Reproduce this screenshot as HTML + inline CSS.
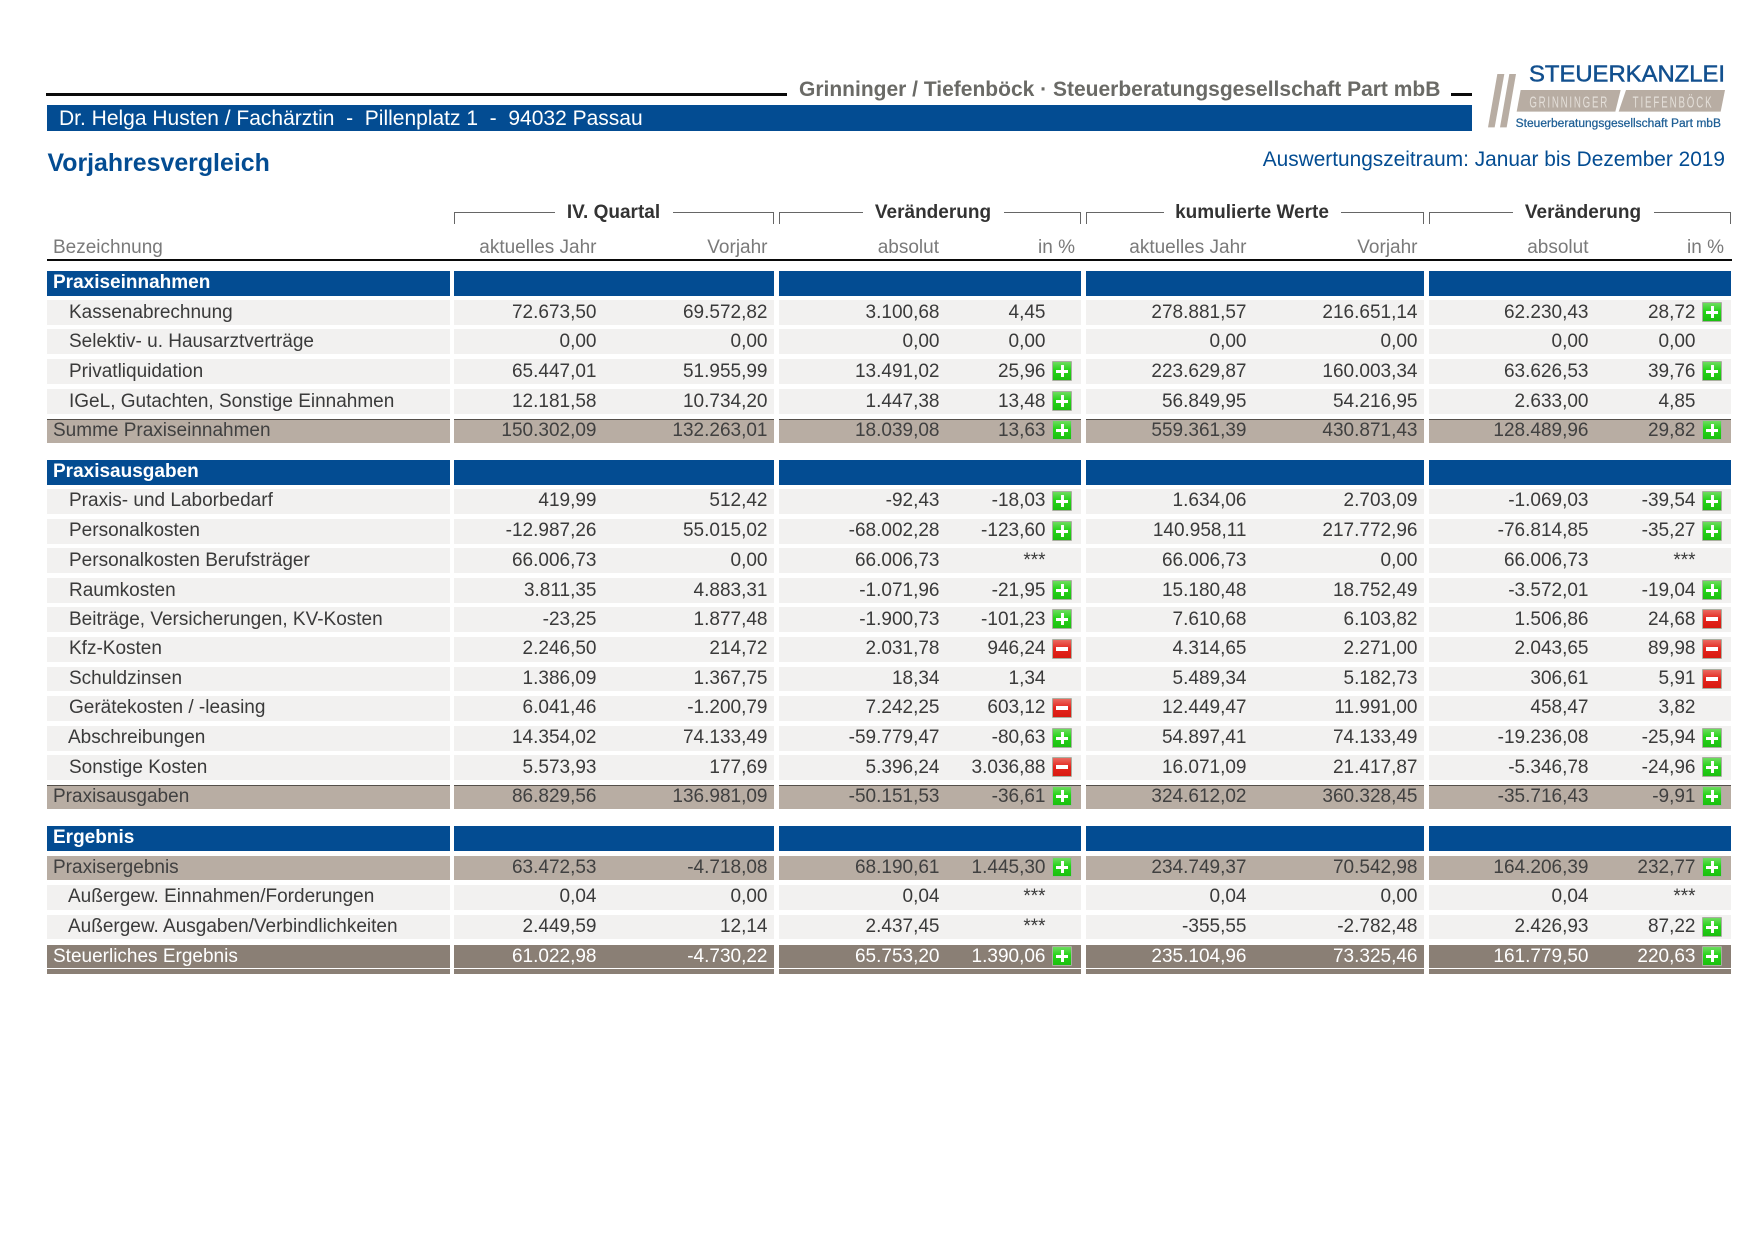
<!DOCTYPE html>
<html lang="de"><head><meta charset="utf-8"><title>Vorjahresvergleich</title>
<style>
html,body{margin:0;padding:0;background:#fff}
#pg{position:relative;width:1754px;height:1240px;overflow:hidden;background:#fff;font-family:"Liberation Sans",sans-serif;font-size:19px;color:#3a3a3a}
.abs{position:absolute;white-space:nowrap}
.r{position:absolute;left:47px;width:1684px;height:25px;line-height:25px;background:#f2f1f0;white-space:nowrap}
.r span{position:absolute;top:0}
.r.u span{top:-1px}
.r .l{left:22px}.r .k{left:6px}.r .j{left:21px}
.c1{right:1134.5px}.c2{right:963.5px}.c3{right:791.5px}.c4{right:685.5px}.c5{right:484.5px}.c6{right:313.5px}.c7{right:142.5px}.c8{right:35.5px}
.h{background:#034c92;color:#fff;font-weight:bold;font-size:19px}
.r.h span{top:-1px}
.s{background:#b8ada3;height:24px;line-height:24px;color:#404040}
.s:before{content:"";position:absolute;left:0;right:0;top:0;height:1px;background:#544f4a}
.n:before{display:none}
.d{background:#8a7f75;color:#fff;height:23px;line-height:23px}
.gap{position:absolute;top:271px;height:704px;background:#fff;z-index:3}
.p,.m{position:absolute;width:18px;height:18px;border:1px solid #a9aea0;top:2px;box-sizing:content-box;border-radius:1px}
.s .p,.s .m,.d .p,.d .m{top:1px}
.p{background:linear-gradient(#6fdc60,#25d418 45%,#1cbf10)}
.m{background:linear-gradient(#ea6a60,#e4241c 50%,#d81a10)}
.p:before,.m:before{content:"";position:absolute;left:3px;top:7.5px;width:12px;height:3px;background:#fff}
.m:before{top:7px;height:4px}
.p:after{content:"";position:absolute;left:7.5px;top:3px;width:3px;height:12px;background:#fff}
.i1{left:1005px}.i2{left:1655px}
.br{position:absolute;top:212px;height:11px;border-top:1px solid #666}
.bl{border-left:1px solid #666}.brr{border-right:1px solid #666}
.gh{position:absolute;top:201px;line-height:24px;font-weight:bold;font-size:19px;color:#333;text-align:center;white-space:nowrap}
.sh{position:absolute;top:236px;line-height:24px;color:#7a7a7a;white-space:nowrap}
</style></head><body><div id="pg">
<div class="abs" style="left:46px;top:93px;width:741px;height:3px;background:#0a0a0a"></div>
<div class="abs" style="left:1451px;top:93px;width:21px;height:3px;background:#0a0a0a"></div>
<div class="abs" style="left:799px;top:77px;line-height:26px;font-size:21px;font-weight:bold;color:#6a6a66">Grinninger / Tiefenböck · Steuerberatungsgesellschaft Part mbB</div>
<div class="abs" style="left:47px;top:105px;width:1425px;height:26px;background:#034c92"></div>
<div class="abs" style="left:59px;top:106px;line-height:26px;font-size:21px;color:#fff;white-space:pre">Dr. Helga Husten / Fachärztin  -  Pillenplatz 1  -  94032 Passau</div>
<div class="abs" style="left:47.5px;top:149px;line-height:28px;font-size:24.9px;font-weight:bold;color:#034c92">Vorjahresvergleich</div>
<div class="abs" style="right:29px;top:147px;line-height:26px;font-size:20.85px;color:#034c92">Auswertungszeitraum: Januar bis Dezember 2019</div>
<svg class="abs" style="left:1460px;top:50px" width="294" height="100" viewBox="0 0 882 300" font-family="Liberation Sans, sans-serif">
<text x="207" y="94" font-size="68" fill="#12508f" stroke="#12508f" stroke-width="1.5" textLength="588" lengthAdjust="spacingAndGlyphs">STEUERKANZLEI</text>
<polygon points="112,72 133,72 104,232 84,232" fill="#b8ada3"/><polygon points="148,72 168,72 140,232 120,232" fill="#b8ada3"/>
<polygon points="182,120 482,120 466,185 170,185" fill="#b8ada3"/><polygon points="498,120 795,120 782,185 476,185" fill="#b8ada3"/>
<text transform="translate(208,172) scale(.62,1)" font-size="47" fill="#e4dfd9" textLength="377" lengthAdjust="spacing">GRINNINGER</text>
<text transform="translate(518,172) scale(.62,1)" font-size="47" fill="#e4dfd9" textLength="382" lengthAdjust="spacing">TIEFENBÖCK</text>
<text x="167" y="231" font-size="37" fill="#1f5f95" stroke="#1f5f95" stroke-width="0.8" textLength="616" lengthAdjust="spacingAndGlyphs">Steuerberatungsgesellschaft Part mbB</text>
</svg>

<div class="br bl" style="left:454px;width:100px"></div><div class="br brr" style="left:673px;width:100px"></div>
<div class="br bl" style="left:779px;width:83px"></div><div class="br brr" style="left:1004px;width:76px"></div>
<div class="br bl" style="left:1086px;width:77px"></div><div class="br brr" style="left:1341px;width:82px"></div>
<div class="br bl" style="left:1429px;width:83px"></div><div class="br brr" style="left:1654px;width:76px"></div>
<div class="gh" style="left:554px;width:119px">IV. Quartal</div>
<div class="gh" style="left:862px;width:142px">Veränderung</div>
<div class="gh" style="left:1163px;width:178px">kumulierte Werte</div>
<div class="gh" style="left:1512px;width:142px">Veränderung</div>
<div class="sh" style="left:53px">Bezeichnung</div>
<div class="sh" style="right:1157.5px">aktuelles Jahr</div>
<div class="sh" style="right:986.5px">Vorjahr</div>
<div class="sh" style="right:815px">absolut</div>
<div class="sh" style="right:679px">in %</div>
<div class="sh" style="right:507.5px">aktuelles Jahr</div>
<div class="sh" style="right:336.5px">Vorjahr</div>
<div class="sh" style="right:165.5px">absolut</div>
<div class="sh" style="right:30px">in %</div>
<div class="abs" style="left:47px;top:259px;width:1685px;height:2px;background:#0a0a0a"></div>

<div class="r h" style="top:271px"><span class="k">Praxiseinnahmen</span></div>
<div class="r" style="top:300px"><span class="l">Kassenabrechnung</span><span class="c1">72.673,50</span><span class="c2">69.572,82</span><span class="c3">3.100,68</span><span class="c4">4,45</span><span class="c5">278.881,57</span><span class="c6">216.651,14</span><span class="c7">62.230,43</span><span class="c8">28,72</span><b class="p i2"></b></div>
<div class="r" style="top:329px"><span class="l">Selektiv- u. Hausarztverträge</span><span class="c1">0,00</span><span class="c2">0,00</span><span class="c3">0,00</span><span class="c4">0,00</span><span class="c5">0,00</span><span class="c6">0,00</span><span class="c7">0,00</span><span class="c8">0,00</span></div>
<div class="r" style="top:359px"><span class="l">Privatliquidation</span><span class="c1">65.447,01</span><span class="c2">51.955,99</span><span class="c3">13.491,02</span><span class="c4">25,96</span><b class="p i1"></b><span class="c5">223.629,87</span><span class="c6">160.003,34</span><span class="c7">63.626,53</span><span class="c8">39,76</span><b class="p i2"></b></div>
<div class="r" style="top:389px"><span class="l">IGeL, Gutachten, Sonstige Einnahmen</span><span class="c1">12.181,58</span><span class="c2">10.734,20</span><span class="c3">1.447,38</span><span class="c4">13,48</span><b class="p i1"></b><span class="c5">56.849,95</span><span class="c6">54.216,95</span><span class="c7">2.633,00</span><span class="c8">4,85</span></div>
<div class="r s" style="top:419px"><span class="k">Summe Praxiseinnahmen</span><span class="c1">150.302,09</span><span class="c2">132.263,01</span><span class="c3">18.039,08</span><span class="c4">13,63</span><b class="p i1"></b><span class="c5">559.361,39</span><span class="c6">430.871,43</span><span class="c7">128.489,96</span><span class="c8">29,82</span><b class="p i2"></b></div>

<div class="r h" style="top:460px"><span class="k">Praxisausgaben</span></div>
<div class="r u" style="top:489px"><span class="l">Praxis- und Laborbedarf</span><span class="c1">419,99</span><span class="c2">512,42</span><span class="c3">-92,43</span><span class="c4">-18,03</span><b class="p i1"></b><span class="c5">1.634,06</span><span class="c6">2.703,09</span><span class="c7">-1.069,03</span><span class="c8">-39,54</span><b class="p i2"></b></div>
<div class="r u" style="top:519px"><span class="l">Personalkosten</span><span class="c1">-12.987,26</span><span class="c2">55.015,02</span><span class="c3">-68.002,28</span><span class="c4">-123,60</span><b class="p i1"></b><span class="c5">140.958,11</span><span class="c6">217.772,96</span><span class="c7">-76.814,85</span><span class="c8">-35,27</span><b class="p i2"></b></div>
<div class="r" style="top:548px"><span class="l">Personalkosten Berufsträger</span><span class="c1">66.006,73</span><span class="c2">0,00</span><span class="c3">66.006,73</span><span class="c4">***</span><span class="c5">66.006,73</span><span class="c6">0,00</span><span class="c7">66.006,73</span><span class="c8">***</span></div>
<div class="r" style="top:578px"><span class="l">Raumkosten</span><span class="c1">3.811,35</span><span class="c2">4.883,31</span><span class="c3">-1.071,96</span><span class="c4">-21,95</span><b class="p i1"></b><span class="c5">15.180,48</span><span class="c6">18.752,49</span><span class="c7">-3.572,01</span><span class="c8">-19,04</span><b class="p i2"></b></div>
<div class="r" style="top:607px"><span class="l">Beiträge, Versicherungen, KV-Kosten</span><span class="c1">-23,25</span><span class="c2">1.877,48</span><span class="c3">-1.900,73</span><span class="c4">-101,23</span><b class="p i1"></b><span class="c5">7.610,68</span><span class="c6">6.103,82</span><span class="c7">1.506,86</span><span class="c8">24,68</span><b class="m i2"></b></div>
<div class="r u" style="top:637px"><span class="l">Kfz-Kosten</span><span class="c1">2.246,50</span><span class="c2">214,72</span><span class="c3">2.031,78</span><span class="c4">946,24</span><b class="m i1"></b><span class="c5">4.314,65</span><span class="c6">2.271,00</span><span class="c7">2.043,65</span><span class="c8">89,98</span><b class="m i2"></b></div>
<div class="r u" style="top:667px;height:24px"><span class="l">Schuldzinsen</span><span class="c1">1.386,09</span><span class="c2">1.367,75</span><span class="c3">18,34</span><span class="c4">1,34</span><span class="c5">5.489,34</span><span class="c6">5.182,73</span><span class="c7">306,61</span><span class="c8">5,91</span><b class="m i2"></b></div>
<div class="r u" style="top:696px"><span class="l">Gerätekosten / -leasing</span><span class="c1">6.041,46</span><span class="c2">-1.200,79</span><span class="c3">7.242,25</span><span class="c4">603,12</span><b class="m i1"></b><span class="c5">12.449,47</span><span class="c6">11.991,00</span><span class="c7">458,47</span><span class="c8">3,82</span></div>
<div class="r u" style="top:726px"><span class="j">Abschreibungen</span><span class="c1">14.354,02</span><span class="c2">74.133,49</span><span class="c3">-59.779,47</span><span class="c4">-80,63</span><b class="p i1"></b><span class="c5">54.897,41</span><span class="c6">74.133,49</span><span class="c7">-19.236,08</span><span class="c8">-25,94</span><b class="p i2"></b></div>
<div class="r" style="top:755px"><span class="l">Sonstige Kosten</span><span class="c1">5.573,93</span><span class="c2">177,69</span><span class="c3">5.396,24</span><span class="c4">3.036,88</span><b class="m i1"></b><span class="c5">16.071,09</span><span class="c6">21.417,87</span><span class="c7">-5.346,78</span><span class="c8">-24,96</span><b class="p i2"></b></div>
<div class="r s" style="top:785px"><span class="k">Praxisausgaben</span><span class="c1">86.829,56</span><span class="c2">136.981,09</span><span class="c3">-50.151,53</span><span class="c4">-36,61</span><b class="p i1"></b><span class="c5">324.612,02</span><span class="c6">360.328,45</span><span class="c7">-35.716,43</span><span class="c8">-9,91</span><b class="p i2"></b></div>

<div class="r h" style="top:826px"><span class="k">Ergebnis</span></div>
<div class="r s n" style="top:856px"><span class="k">Praxisergebnis</span><span class="c1">63.472,53</span><span class="c2">-4.718,08</span><span class="c3">68.190,61</span><span class="c4">1.445,30</span><b class="p i1"></b><span class="c5">234.749,37</span><span class="c6">70.542,98</span><span class="c7">164.206,39</span><span class="c8">232,77</span><b class="p i2"></b></div>
<div class="r u" style="top:885px"><span class="j">Außergew. Einnahmen/Forderungen</span><span class="c1">0,04</span><span class="c2">0,00</span><span class="c3">0,04</span><span class="c4">***</span><span class="c5">0,04</span><span class="c6">0,00</span><span class="c7">0,04</span><span class="c8">***</span></div>
<div class="r u" style="top:915px;height:24px"><span class="j">Außergew. Ausgaben/Verbindlichkeiten</span><span class="c1">2.449,59</span><span class="c2">12,14</span><span class="c3">2.437,45</span><span class="c4">***</span><span class="c5">-355,55</span><span class="c6">-2.782,48</span><span class="c7">2.426,93</span><span class="c8">87,22</span><b class="p i2"></b></div>
<div class="r d" style="top:945px"><span class="k">Steuerliches Ergebnis</span><span class="c1">61.022,98</span><span class="c2">-4.730,22</span><span class="c3">65.753,20</span><span class="c4">1.390,06</span><b class="p i1"></b><span class="c5">235.104,96</span><span class="c6">73.325,46</span><span class="c7">161.779,50</span><span class="c8">220,63</span><b class="p i2"></b></div>
<div class="r" style="top:969px;height:5px;background:#8a7f75"></div>

<div class="gap" style="left:450px;width:4px"></div>
<div class="gap" style="left:774px;width:5px"></div>
<div class="gap" style="left:1081px;width:5px"></div>
<div class="gap" style="left:1424px;width:5px"></div>
</div></body></html>
